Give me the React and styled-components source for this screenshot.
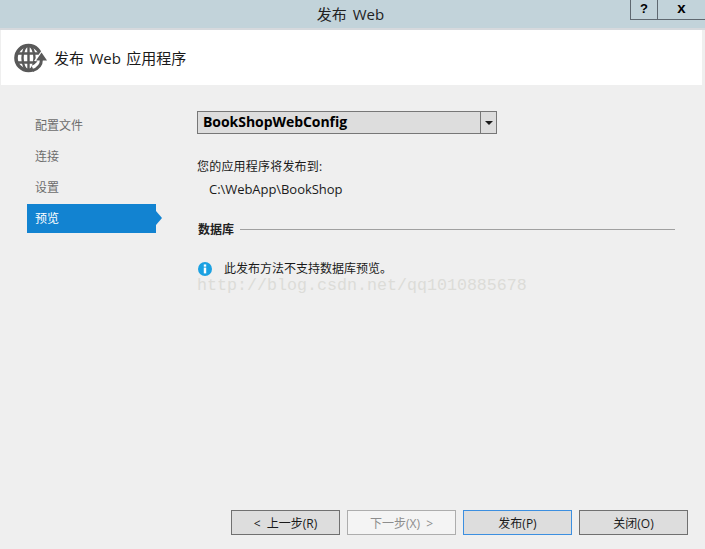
import React from 'react';
import styled, {createGlobalStyle} from 'styled-components';

const GlobalStyle = createGlobalStyle`
    html, body {
        margin: 0;
        padding: 0;
        background: #efefef;
    }
    * {
        box-sizing: border-box;
    }
`;

const NAV_ITEMS = ['配置文件', '连接', '设置', '预览'];

const App = () => {
    return (
        <Dialog>
            <GlobalStyle />
            <TitleBar>
                <span />
                <Title>发布 Web</Title>
                <WindowButtons>
                    <HelpButton>?</HelpButton>
                    <CloseButton>x</CloseButton>
                </WindowButtons>
            </TitleBar>
            <Header>
                <GlobeIcon />
                <Heading>发布 Web 应用程序</Heading>
            </Header>
            <Main>
                <Sidebar>
                    {NAV_ITEMS.map(item => (
                        <NavItem key={item} $active={item === '预览'}>{item}</NavItem>
                    ))}
                </Sidebar>
                <Content>
                    <ProfileSelect>
                        <ProfileName>BookShopWebConfig</ProfileName>
                        <SelectArrow />
                    </ProfileSelect>
                    <Label>您的应用程序将发布到:</Label>
                    <PathText>C:\WebApp\BookShop</PathText>
                    <SectionHeader>
                        <SectionTitle>数据库</SectionTitle>
                        <SectionLine />
                    </SectionHeader>
                    <InfoRow>
                        <InfoIcon />
                        <span>此发布方法不支持数据库预览。</span>
                    </InfoRow>
                </Content>
            </Main>
            <Footer>
                <FooterButton>&lt; 上一步(R)</FooterButton>
                <FooterButton disabled>下一步(X) &gt;</FooterButton>
                <FooterButton $focused>发布(P)</FooterButton>
                <FooterButton>关闭(O)</FooterButton>
            </Footer>
            <Watermark>http://blog.csdn.net/qq1010885678</Watermark>
        </Dialog>
    );
};

const GlobeIcon = () => (
    <svg width="34" height="30" viewBox="0 0 34 30" fill="none">
        <circle cx="14.5" cy="15" r="12.5" stroke="#595959" strokeWidth="3.6" />
        <ellipse cx="14.5" cy="15" rx="6" ry="12.5" stroke="#595959" strokeWidth="2.4" />
        <path d="M3 10.5h23M3 19.5h23M14.5 2v26" stroke="#595959" strokeWidth="2.4" />
        <path d="M28 14c0 6-4 10-9 12" stroke="#fff" strokeWidth="7" />
        <path d="M20 18l8-11 6 11z" fill="#fff" />
        <path d="M27.5 16c0 6-4 10-9 11.5" stroke="#595959" strokeWidth="3" />
        <path d="M22 17.5l5.5-8 5.5 8z" fill="#595959" />
    </svg>
);

const InfoIcon = () => (
    <svg width="14" height="14" viewBox="0 0 15 15">
        <circle cx="7.5" cy="7.5" r="7.5" fill="#1ba1e2" />
        <rect x="6.2" y="2.6" width="2.6" height="2.4" fill="#fff" />
        <rect x="6.2" y="6" width="2.6" height="6.2" fill="#fff" />
    </svg>
);

const SelectArrow = () => (
    <ArrowCell>
        <svg width="8" height="4" viewBox="0 0 8 4">
            <path d="M0 0h8L4 4z" fill="#1a1a1a" />
        </svg>
    </ArrowCell>
);

const fontStack = `"Open Sans", "Noto Sans CJK SC", sans-serif`;

const Dialog = styled.div`
    position: relative;
    width: 705px;
    height: 549px;
    display: flex;
    flex-direction: column;
    overflow: hidden;
    background: #efefef;
    color: #1a1a1a;
    font-family: ${fontStack};
    font-size: 12px;
`;

const TitleBar = styled.div`
    flex: none;
    height: 30px;
    display: grid;
    grid-template-columns: 1fr auto 1fr;
    background: #c2d3da;
    border-bottom: 2px solid #d6d9dd;
`;

const Title = styled.div`
    padding-right: 4px;
    font-size: 15px;
    word-spacing: 2px;
    line-height: 28px;
    color: #222;
`;

const WindowButtons = styled.div`
    justify-self: end;
    display: flex;
    height: 20px;
    border-left: 1px solid #5f6870;
    border-bottom: 1px solid #5f6870;
`;

const HelpButton = styled.div`
    width: 27px;
    text-align: center;
    font: bold 13px/18px "Liberation Sans", sans-serif;
    color: #000;
    border-right: 1px solid #5f6870;
`;

const CloseButton = styled.div`
    width: 47px;
    text-align: center;
    font: bold 15px/16px "Liberation Sans", sans-serif;
    color: #000;
`;

const Header = styled.div`
    flex: none;
    height: 55px;
    margin: 0 3px 0 1px;
    padding-left: 13px;
    display: flex;
    align-items: center;
    gap: 6px;
    background: #fff;
`;

const Heading = styled.div`
    font-size: 15px;
    word-spacing: 1.5px;
    color: #1a1a1a;
`;

const Main = styled.div`
    flex: 1;
    display: flex;
    padding: 26px 0 0 27px;
`;

const Sidebar = styled.div`
    flex: none;
    width: 129px;
    margin-right: 41px;
    display: flex;
    flex-direction: column;
    gap: 2px;
`;

const NavItem = styled.div`
    position: relative;
    height: 29px;
    padding-left: 8px;
    line-height: 30px;
    color: ${props => (props.$active ? '#fff' : '#6d6d6d')};
    background: ${props => (props.$active ? '#1283d1' : 'transparent')};

    &::after {
        content: '';
        display: ${props => (props.$active ? 'block' : 'none')};
        position: absolute;
        left: 100%;
        top: 7px;
        border-left: 6px solid #1283d1;
        border-top: 7px solid transparent;
        border-bottom: 7px solid transparent;
    }
`;

const Content = styled.div`
    flex: 1;
    padding-right: 30px;
`;

const ProfileSelect = styled.div`
    width: 300px;
    height: 23px;
    display: flex;
    background: #dddddd;
    border: 1px solid #777;
`;

const ProfileName = styled.div`
    flex: 1;
    padding-left: 5px;
    font-size: 14px;
    font-weight: 700;
    line-height: 20px;
    color: #000;
    letter-spacing: -0.05px;
`;

const ArrowCell = styled.div`
    flex: none;
    width: 16px;
    display: flex;
    align-items: center;
    justify-content: center;
    border-left: 1px solid #777;
`;

const Label = styled.div`
    margin-top: 24px;
    line-height: 18px;
    letter-spacing: 0.2px;
`;

const PathText = styled.div`
    margin: 4px 0 0 12px;
    font-size: 13px;
    line-height: 18px;
    letter-spacing: -0.05px;
`;

const SectionHeader = styled.div`
    margin-top: 22px;
    display: flex;
    align-items: center;
    gap: 6px;
    height: 18px;
`;

const SectionTitle = styled.div`
    padding-left: 1px;
    font-weight: 700;
    color: #222;
`;

const SectionLine = styled.div`
    flex: 1;
    height: 1px;
    background: #a0a0a0;
`;

const InfoRow = styled.div`
    margin-top: 22px;
    display: flex;
    align-items: center;
    gap: 12px;
    height: 18px;
    padding-left: 1px;
    line-height: 14px;
`;

const Footer = styled.div`
    flex: none;
    display: flex;
    justify-content: flex-end;
    gap: 7px;
    padding: 0 17px 14px 0;
`;

const FooterButton = styled.button`
    width: 109px;
    height: 25px;
    padding: 0;
    font-family: ${fontStack};
    font-size: 12px;
    word-spacing: 3px;
    color: #1a1a1a;
    background: #dddddd;
    border: 1px solid ${props => (props.$focused ? '#3c8fe0' : '#707070')};

    &:disabled {
        color: #8d8d8d;
        background: #f4f4f4;
        border-color: #adadad;
    }
`;

const Watermark = styled.div`
    position: absolute;
    left: 197px;
    top: 278px;
    font-family: "Liberation Mono", monospace;
    font-size: 16.67px;
    line-height: 16px;
    color: #dcdcd8;
    white-space: nowrap;
`;

export default App;
